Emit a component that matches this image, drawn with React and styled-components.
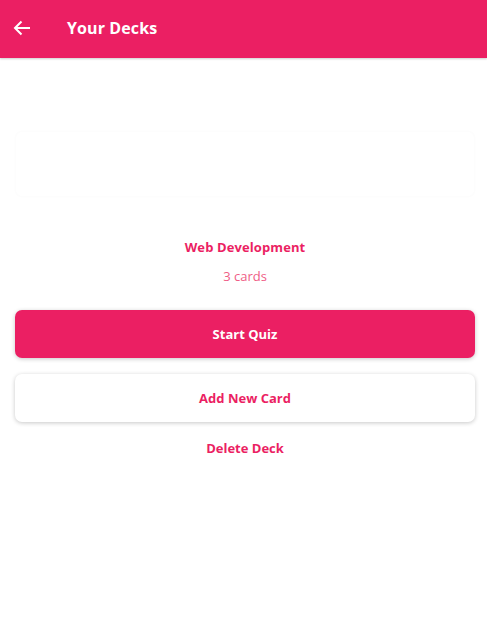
import styled, { createGlobalStyle } from 'styled-components'

const pink = '#EB1F63'

const Global = createGlobalStyle`
  body {
    margin: 0;
    background: #fff;
    font-family: "Open Sans", "Noto Sans", sans-serif;
  }
`

const Header = styled.header`
  height: 58px;
  background: ${pink};
  display: flex;
  align-items: center;
  padding: 0 12px 3px;
  box-shadow: 0 1px 2px rgba(0, 0, 0, 0.2);
  box-sizing: border-box;

  h1 {
    margin: 0 0 0 35px;
    color: #fff;
    font-size: 16px;
    font-weight: 700;
    letter-spacing: 0.1px;
  }
`

const Back = styled.button`
  border: 0;
  background: none;
  padding: 0;
  display: flex;
  color: #fff;
`

const Content = styled.main`
  padding: 73px 12px 0 15px;
  display: flex;
  flex-direction: column;
`

const GhostCard = styled.div`
  height: 64px;
  border-radius: 8px;
  background: #fff;
  box-shadow: 0 0 3px rgba(0, 0, 0, 0.015);
  border: 1px solid rgba(0, 0, 0, 0.008);
`

const Title = styled.div`
  margin-top: 41px;
  text-align: center;
  color: ${pink};
  font-size: 13px;
  font-weight: 700;
  line-height: 18px;
  letter-spacing: 0.1px;
`

const Count = styled.div`
  margin-top: 11px;
  text-align: center;
  color: #ef5d86;
  font-size: 13px;
  line-height: 18px;
`

const Button = styled.button`
  height: 48px;
  border: 0;
  border-radius: 7px;
  font-family: inherit;
  font-size: 13px;
  font-weight: 700;
  background: ${p => (p.$primary ? pink : '#fff')};
  color: ${p => (p.$primary ? '#fff' : pink)};
  box-shadow: 0 1px 4px rgba(0, 0, 0, 0.22);
  margin-top: ${p => p.$gap}px;
`

const Delete = styled.button`
  margin-top: 16px;
  border: 0;
  background: none;
  color: ${pink};
  font-family: inherit;
  font-size: 13px;
  font-weight: 700;
  line-height: 18px;
`

export default function App() {
  return (
    <>
      <Global />
      <Header>
        <Back aria-label="back">
          <svg width="20" height="20" viewBox="0 0 20 20" fill="none" stroke="currentColor" strokeWidth="2">
            <path d="M18 10H3M9.5 3.5L3 10l6.5 6.5" />
          </svg>
        </Back>
        <h1>Your Decks</h1>
      </Header>
      <Content>
        <GhostCard />
        <Title>Web Development</Title>
        <Count>3 cards</Count>
        <Button $primary $gap={25}>Start Quiz</Button>
        <Button $gap={16}>Add New Card</Button>
        <Delete>Delete Deck</Delete>
      </Content>
    </>
  )
}
